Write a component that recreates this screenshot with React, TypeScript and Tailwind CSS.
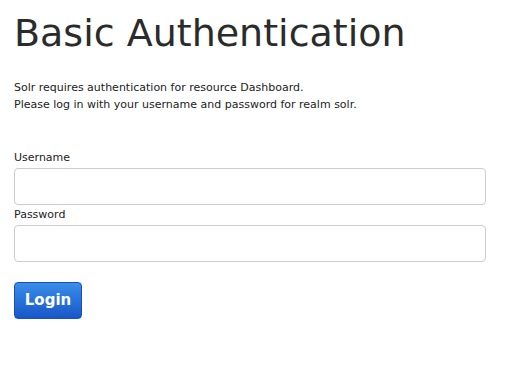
import React from "react";

export default function App() {
  return (
    <div className="min-h-[387px] bg-white px-[14px] pt-[8px] text-[#333]" style={{ fontFamily: '"DejaVu Sans", Verdana, sans-serif' }}>
      <h1 className="text-[38px] leading-[50px] font-normal text-[#2b2b2b]">Basic Authentication</h1>
      <div className="mt-[21px] text-[11px] leading-[17px] text-[#222]">
        <p>Solr requires authentication for resource Dashboard.</p>
        <p>Please log in with your username and password for realm solr.</p>
      </div>
      <form className="mt-[38px] flex flex-col w-[472px]">
        <label className="text-[11px] leading-[14px] text-[#222]">Username</label>
        <input type="text" className="mt-[3px] h-[37px] rounded-[4px] border border-[#ccc] bg-white" />
        <label className="mt-[3px] text-[11px] leading-[14px] text-[#222]">Password</label>
        <input type="password" className="mt-[3px] h-[37px] rounded-[4px] border border-[#ccc] bg-white" />
        <div className="mt-[20px]">
          <button type="button" className="h-[37px] w-[68px] rounded-[4px] border border-[#1a4fb8] bg-gradient-to-b from-[#3a8ee8] to-[#1a56c9] text-white text-[15px] font-bold">Login</button>
        </div>
      </form>
    </div>
  );
}
